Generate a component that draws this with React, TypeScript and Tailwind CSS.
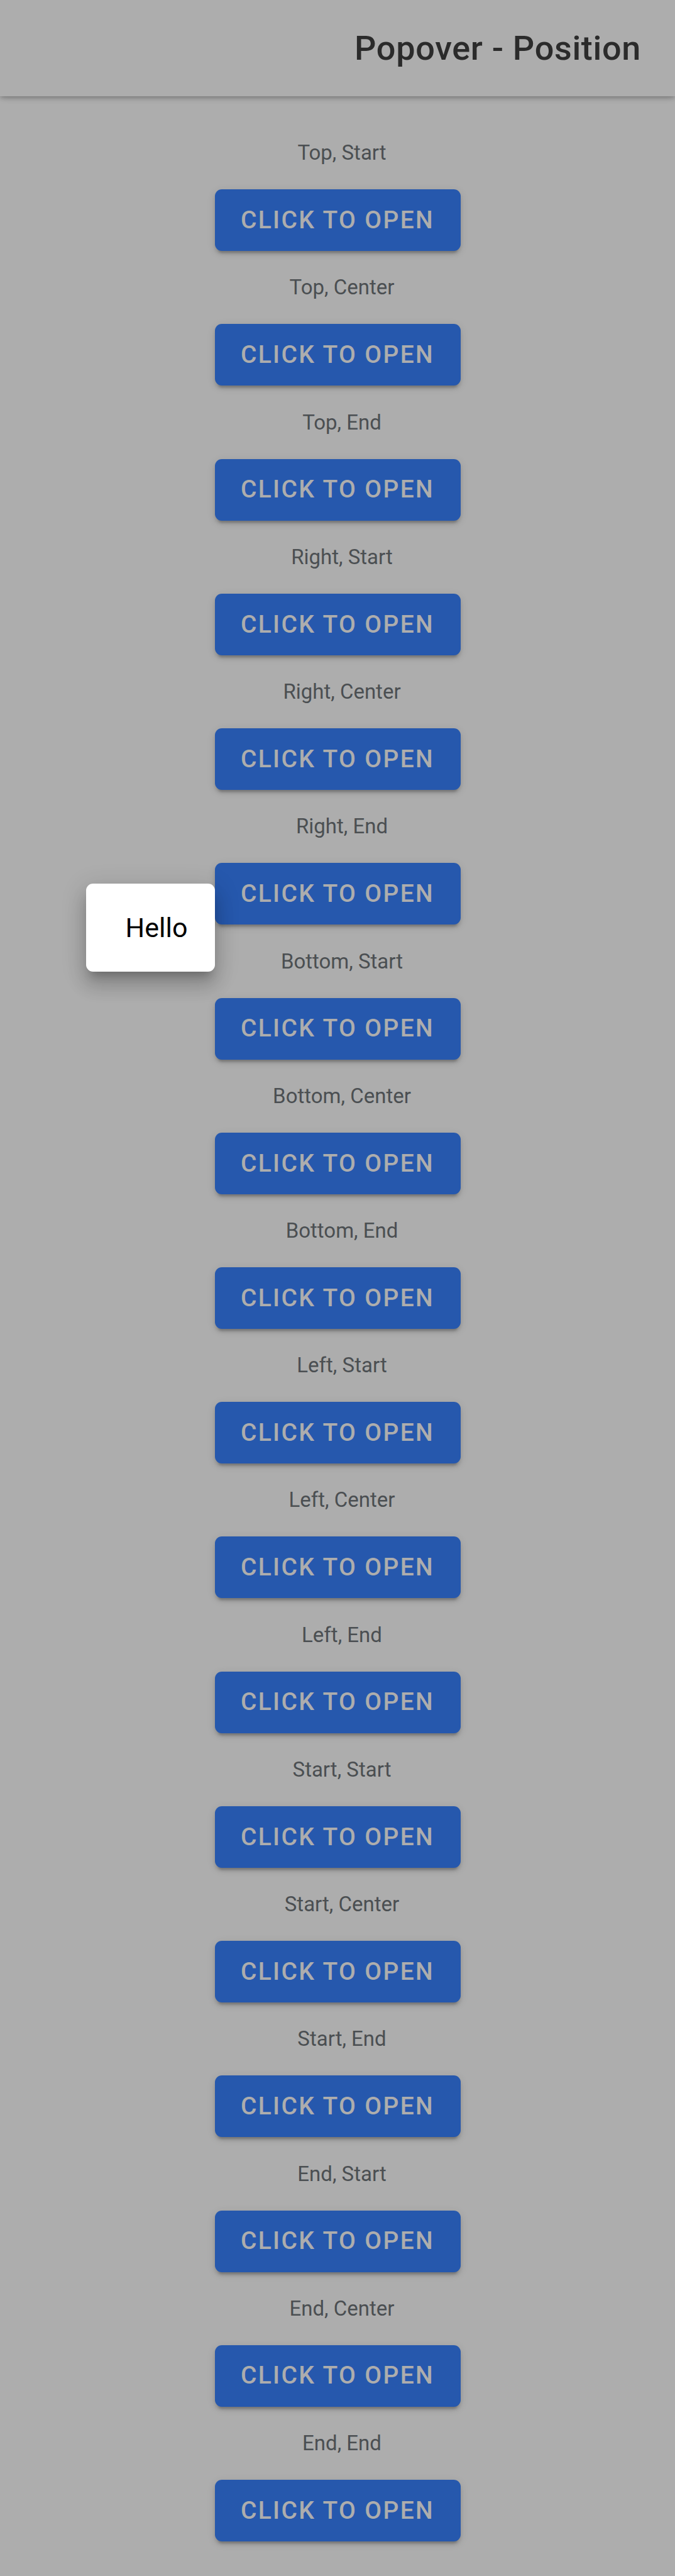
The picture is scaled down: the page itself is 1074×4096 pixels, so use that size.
const positions = [
  'Top, Start',
  'Top, Center',
  'Top, End',
  'Right, Start',
  'Right, Center',
  'Right, End',
  'Bottom, Start',
  'Bottom, Center',
  'Bottom, End',
  'Left, Start',
  'Left, Center',
  'Left, End',
  'Start, Start',
  'Start, Center',
  'Start, End',
  'End, Start',
  'End, Center',
  'End, End',
];

const openPosition = 'Right, End';

function Popover() {
  return (
    <div
      role="dialog"
      aria-label="Hello"
      className="absolute top-[33px] right-full z-10 flex h-[140px] w-[205px] items-center justify-end rounded-[11px] bg-white pr-[43px] text-[43px] text-black shadow-[0_14px_14px_-8px_rgba(0,0,0,0.2),0_22px_28px_3px_rgba(0,0,0,0.14),0_8px_38px_5px_rgba(0,0,0,0.12)]"
    >
      Hello
    </div>
  );
}

function PositionRow({ label, open }: { label: string; open: boolean }) {
  const id = label.toLowerCase().replace(', ', '-');
  return (
    <section className="flex flex-1 flex-col items-center justify-end gap-[38px]">
      <h2 id={id} className="pl-[14px] text-[33px] leading-[40px] font-normal text-[#4b4f52]">
        {label}
      </h2>
      <div className="relative">
        <button
          type="button"
          aria-describedby={id}
          aria-expanded={open}
          className="block h-[98px] min-w-[391px] rounded-[11px] bg-[#2658ad] px-10 text-[39px] font-medium tracking-[0.06em] whitespace-nowrap text-[#adadad] uppercase shadow-[0_8px_3px_-5px_rgba(0,0,0,0.16),0_5px_5px_0_rgba(0,0,0,0.12),0_3px_14px_0_rgba(0,0,0,0.1)]"
        >
          Click to open
        </button>
        {open && <Popover />}
      </div>
    </section>
  );
}

export default function App() {
  return (
    <div className="flex min-h-screen flex-col bg-[#adadad] font-['Roboto',sans-serif]">
      <header className="flex h-[153px] shrink-0 items-center justify-end bg-[#adadad] pr-[54px] shadow-[0_5px_11px_-3px_rgba(0,0,0,0.18),0_3px_6px_0_rgba(0,0,0,0.16)]">
        <h1 className="text-[54px] font-medium tracking-[0.0125em] text-[#2b2b2b]">Popover - Position</h1>
      </header>
      <main className="flex flex-1 flex-col pt-8 pb-[55px]">
        {positions.map((label) => (
          <PositionRow key={label} label={label} open={label === openPosition} />
        ))}
      </main>
    </div>
  );
}
